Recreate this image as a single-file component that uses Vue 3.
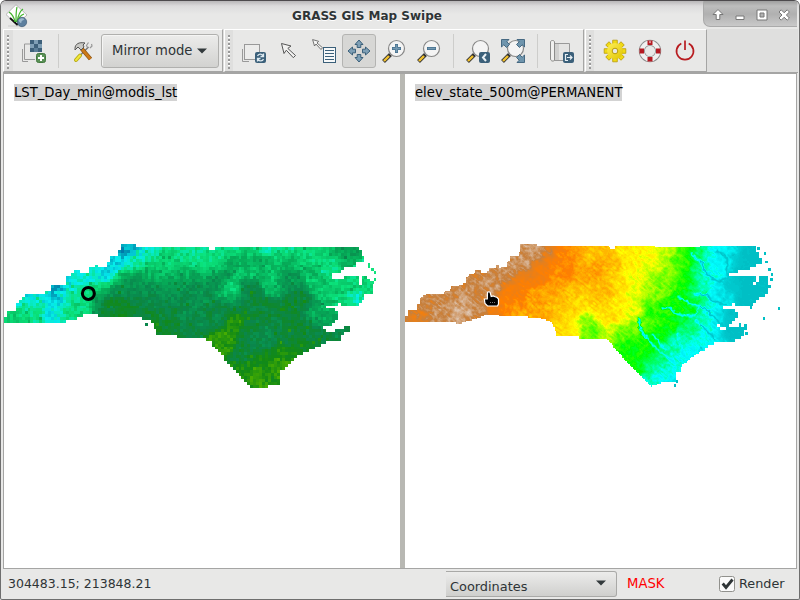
<script setup>
const hash = (x, y) => {
  let h = (x * 374761393 + y * 668265263) | 0
  h = Math.imul(h ^ (h >>> 13), 1274126177)
  return ((h ^ (h >>> 16)) >>> 0) / 4294967295
}
const smooth = (x, y) => {
  const ix = Math.floor(x), iy = Math.floor(y)
  let fx = x - ix, fy = y - iy
  fx = fx * fx * (3 - 2 * fx)
  fy = fy * fy * (3 - 2 * fy)
  const a = hash(ix, iy) * (1 - fx) + hash(ix + 1, iy) * fx
  const b = hash(ix, iy + 1) * (1 - fx) + hash(ix + 1, iy + 1) * fx
  return (a * (1 - fy) + b * fy) * 2 - 1
}
const parse = s => s.trim().split(/\s+/).map(p => p.split(',').map(Number))
const inside = (x, y, poly) => {
  let r = false
  for (let i = 0, j = poly.length - 1; i < poly.length; j = i++) {
    const [xi, yi] = poly[i], [xj, yj] = poly[j]
    if ((yi > y) !== (yj > y) && x < ((xj - xi) * (y - yi)) / (yj - yi) + xi) r = !r
  }
  return r
}
const field = (x, y, pts, s) => {
  let n = 0, d = 0
  for (const [px, py, v] of pts) {
    const q = (px - x) ** 2 + (py - y) ** 2
    const w = Math.exp(-q / s) + 1e-7 / (1 + q)
    n += w * v
    d += w
  }
  return n / d
}
const lineDistance = (x, y, line) => {
  let best = 1e9
  for (let i = 1; i < line.length; i++) {
    const [ax, ay] = line[i - 1], [bx, by] = line[i]
    const dx = bx - ax, dy = by - ay
    const t = Math.max(0, Math.min(1, ((x - ax) * dx + (y - ay) * dy) / (dx * dx + dy * dy)))
    best = Math.min(best, Math.hypot(x - ax - t * dx, y - ay - t * dy))
  }
  return best
}
const STEPS = 14
const shade = (stops, level) => {
  const t = Math.max(0, Math.min(stops.length - 1.001, level / STEPS))
  const i = Math.floor(t), f = t - i
  return `rgb(${stops[i].map((c, k) => Math.round(c + (stops[i + 1][k] - c) * f)).join(',')})`
}
// Rasterise a field into one path per colour class.
const raster = ({ x0, x1, y0, y1, size, test, value, stops }) => {
  const layers = {}
  for (let j = 0; y0 + j * size < y1; j++) {
    const y = y0 + j * size
    for (let i = 0; x0 + i * size < x1; i++) {
      const x = x0 + i * size
      if (!test(x + size / 2, y + size / 2)) continue
      const v = value(x + size / 2, y + size / 2, i, j)
      const k = Math.round(Math.max(0, Math.min(stops.length - 1, v)) * STEPS)
      const X = +x.toFixed(2), Y = +y.toFixed(2)
      layers[k] = (layers[k] || '') + `M${X} ${Y}h${size}v${size}h-${size}z`
    }
  }
  return Object.entries(layers).map(([k, d]) => ({ d, fill: shade(stops, +k) }))
}

const southWest = `207,339 178,339 178,336 157,336 155,330 151.5,322 145,320 136.5,317.5 100,316.5 98,315 86.5,315 76.5,319 58,324 52,322.5`
const northWest = `4,323 4,317 7,316 7,310 17,310 17,304 20,304 20,299 22,296 27,294 44,294 45,291 51,290 52,286 58,286 66,283 67,276 75,273 76,270 81,270 82,274 88,272 89,269 96,268 96,265 98,265 99,268 107,267 107,262 110,261 110,257 118,256 120,250 120,244 136,244 136,246 209,246 210,249 215,249 215,246`
const leftOutline = parse(`${northWest} 357.7,246 360,249 362,254 365,257 366,263.5 358,261 355,267 348,268 342,270 342,272 331.5,272.5 331.5,278 345,278 347,275.500 357.500,275.500 358,286 361,286 362,275 368,277 371.5,281 373.5,293.5 365,295 361.5,302 356.5,306.5 340,306.5 340,304 333,304.500 326,304.500 326,307 333,309 338,311 338,318 331.5,326.5 323,327 321.5,330 333,331 342,328 346.5,326.5 350,326.5 349,331.5 341.5,335 340,340 328,342 316.5,346.5 306.5,351.5 295,358 286.5,366.5 279,373 278,385 253,388 245,380 226.5,361.5 210,341 ${southWest}`)
const shift = s => parse(s).map(([x, y]) => `${x + 400.5},${y}`).join(' ')
const rightOutline = parse(`${shift(northWest)} 695,247.5 757,246 758,255 762,262 753,267 749,270 728,273 728,278 736,276 757,276 754,285 757,285 759,276 766,276 770,287 767,295 762,297 752,307 736,307 736,302 732,306 723,306 727,310 736,310 738,315 728,327 718,325 720,331 728,328 739,328 746,325 745,335 738,340 715,343 703,350 693,357 683,365 680,372 676,372 677,383 662,383 651,387 625,360 607,339 ${shift(southWest)}`)

const lst = parse(`8,320,3.1 15,316,3.3 25,300,2 35,312,3 45,300,2.1 53,289,.9 55,315,2 62,305,2 68,290,2 70,312,3 80,280,2 78,300,3 88,310,3.1 88,293,2.8 95,275,2 96,290,3.4 100,300,5 102,312,5.6 110,270,1.8 115,265,1.2 120,275,3.5 125,250,.9 133,248,1.3 128,262,2 145,250,2 135,265,3 125,285,4.6 120,308,6 135,300,5 140,312,5.2 150,262,3.2 150,274,3.7 150,285,4.5 140,280,4.4 160,252,2.9 165,264,3.2 165,278,4.1 160,292,4.7 175,288,4.6 155,304,4.9 155,315,5.8 157,325,6 170,315,5.1 175,260,3.1 180,275,4 175,300,4.7 172,330,5.9 190,250,2.9 190,262,3.3 190,275,3.9 195,288,4.6 195,300,4.8 190,330,5 185,315,4.8 200,249,2.5 212,258,3 215,265,3.2 235,262,4 220,280,4.6 232,290,3.2 230,305,5 215,320,5 222,340,6.8 235,325,6.5 245,270,3.5 225,250,2.9 245,250,3.1 265,247,2.3 275,258,3.7 255,260,4 285,247,2.6 290,262,3.8 270,280,3.7 250,290,5 265,310,5.2 260,340,5 250,330,5.2 245,370,6.4 255,380,6.8 268,380,6.6 275,370,6.9 265,365,6.2 285,360,6.6 245,355,5.3 300,335,5.6 295,350,5.9 310,335,5.9 290,320,5.3 300,300,5.2 290,280,4.4 305,265,3.5 310,250,3.2 325,255,3.2 330,265,2.8 345,255,4.2 355,252,4.6 364,262,2.6 320,285,3.6 335,290,3.4 350,285,3.4 355,297,2.4 360,285,3.1 370,290,3 345,300,3 320,310,4 330,315,3.9 315,325,4.7 335,335,5 345,330,5 325,338,5.2`)
const elevation = parse(`410,318,4.6 420,312,4.8 415,320,4.3 430,300,5 440,310,5.2 450,298,5 460,290,5.1 465,305,5.6 470,285,5 475,310,5 475,280,4.7 480,295,4.8 490,285,5.5 490,272,5 483,300,4.9 495,308,4.4 505,275,5.2 515,265,5.1 520,255,5.4 525,248,5.3 535,250,5.3 545,250,5 555,250,4 530,262,5 545,262,4.2 535,275,4.2 520,280,4.1 505,290,4 515,295,4.1 500,310,4 515,312,3.6 540,270,4.1 555,262,4 570,258,3.9 560,270,3.9 575,250,3.8 555,285,3.7 540,300,3.7 540,315,3.6 560,325,3.3 558,310,3.4 570,300,3.4 575,315,3.2 585,270,3.6 590,255,3.3 585,305,3.3 600,250,3.5 595,270,3.8 610,265,3.5 600,290,3.5 597,308,3.3 587,322,2.4 595,332,2.1 590,334,2.3 575,330,3 566,333,3.2 610,335,2.7 605,325,3.2 615,310,3.2 620,280,3.2 630,255,3.1 645,255,3 635,275,3 640,290,2.8 630,310,2.9 650,275,2.7 655,290,2.5 665,260,2.7 670,250,2.7 665,280,2.4 680,260,2.2 690,250,2 625,335,2.3 640,325,2.4 650,320,2.2 620,350,2 640,350,2 635,365,2 650,340,2 660,310,2.1 675,300,2 685,285,2 685,310,2 670,330,1.9 690,325,1.6 655,355,1.6 650,370,1.4 655,380,1 665,370,1.3 675,350,1.3 680,340,1.2 690,345,1 670,382,.5 675,365,1 700,265,1.5 700,285,1.2 698,300,1.7 705,255,1.2 710,280,1 715,260,.9 720,250,.8 725,265,.9 728,250,.8 735,255,0 750,260,0 735,270,0 722,295,.7 730,290,.1 745,290,0 765,285,0 750,300,0 700,325,1.1 710,310,1 720,318,.5 732,318,0 705,335,1 715,338,.7 730,335,0 745,330,0 690,355,.8`)
const rivers = [
  '691,254 697,259 702,263 705,272 713,279 719,281 727,279',
  '717,251 722,254 728,260 727,267 728,278',
  '662,308 670,308 674,313 685,316 695,315 700,307',
  '695,294 706,295 713,301 725,305',
  '678,297 687,302 692,305 704,308 712,315 724,327',
  '639,319 640,328 648,340 655,347 665,356 674,361 676,371',
  '653,334 661,345 665,350', '677,334 682,350 681,360', '693,335 697,345 702,348', '695,320 705,329 715,340',
].map(parse)

const leftLayers = raster({
  x0: 4.1, x1: 380, y0: 244, y1: 390, size: 2.93,
  test: (x, y) => inside(x, y, leftOutline),
  value: (x, y, i, j) => {
    const f = field(x, y, lst, 70)
    return (f > 5.5 ? f - 0.3 : f) + smooth(x / 7, y / 7) * 0.35 + (hash(i, j) - 0.5) * 0.8 +
      (hash(i + 500, j) > 0.94 ? 0.6 : 0)
  },
  stops: [[0, 50, 145], [0, 150, 180], [4, 238, 238], [10, 226, 122], [6, 172, 88], [10, 134, 76], [18, 138, 20], [70, 172, 2]],
})
const rightLayers = raster({
  x0: 405, x1: 780, y0: 244, y1: 390, size: 1,
  test: (x, y) => {
    const s = x < 700 ? 1.5 : 3
    return inside((Math.floor(x / s) + 0.5) * s, (Math.floor(y / s) + 0.5) * s, rightOutline)
  },
  value: (x, y, i, j) => {
    const wx = x + smooth(x / 6, y / 6) * 4, wy = y + smooth(x / 6 + 40, y / 6) * 4
    let f = field(wx, wy, elevation, 75)
    if (x > 635 && f > 0.25) {
      const rx = x + smooth(x / 2.5, y / 2.5) * 1.3, ry = y + smooth(x / 2.5 + 9, y / 2.5) * 1.3
      const d = Math.min(...rivers.map(r => lineDistance(rx, ry, r)))
      const bed = x > 700 ? 0.1 : 0.9
      if (f > bed) f -= (f - bed) * Math.exp(-(d * d) / 1.4)
    }
    const u = (x + y * 0.8) / 9, v = (y - x * 0.8) / 4
    const ridge = 1 - Math.abs(smooth(u, v)) * 2
    const a = f < 0.3 ? 0.03 : f < 1.3 ? 0.2 : f < 2.2 ? 0.14 : f < 4.5 ? 0.15 : 0.4
    return f + ridge * a + smooth(x / 2.2, y / 2.2) * a * 0.9 + (hash(i, j) - 0.5) * a * 0.4
  },
  stops: [[0, 191, 197], [0, 255, 255], [0, 255, 0], [255, 255, 0], [255, 127, 0], [198, 128, 62], [220, 190, 165], [250, 248, 245]],
})
const leftIslands = parse(`368,263,2,5 371,268,3,3 374,271,2,3 374,278,2,3 370,281,4,3 145,323,3,3 321,303,3,2`)
const rightIslands = parse(`757,247,3,3 764,252,2,3 765,261,3,2 768,268,3,3 771,273,2,3 770,278,3,3 778,307,2,3 763,317,2,3 739,323,2,5 745,332,3,3 674,384,2,3 676,380,2,3 750,306,2,3`)
</script>

<template>
  <div class="window">
    <header class="titlebar">
      <svg class="logo" viewBox="0 0 24 24">
        <path d="M11 .7 22 11 11.500 20.500 1 10.500z" fill="#fff" stroke="#aaa" stroke-width=".8" />
        <path d="M3 22h14" stroke="#ccc" />
        <path d="M5 14 12 20.500 16 17" fill="none" stroke="#111" stroke-width="1.800" />
        <path d="M11 18C11 10 11 7 12 3M10 18C9 13 7 10 4 8M12 18C13 12 15 7 18 5M12 18C14 13 16 11 19 10" fill="none" stroke="#44b52e" stroke-width="1.200" />
        <circle cx="17" cy="18" r="4.700" fill="#5d7f9e" stroke="#405b75" stroke-width=".7" />
        <path d="M13.500 16c2-2 4-2 6-1-1 2-3 1-3 3s-2 1-3-2" fill="#9db8cc" />
      </svg>
      <h1>GRASS GIS Map Swipe</h1>
      <div class="controls">
        <svg viewBox="0 0 94 25">
          <g fill="#fff" stroke="#777" stroke-width="1" stroke-linejoin="round">
            <path d="m15 8.500 5 5h-3.200v5h-3.600v-5H10z" />
            <rect x="33" y="15" width="8" height="3.500" />
            <path fill-rule="evenodd" d="M54 9h10v10H54zM57 12v4h4v-4z" />
            <path d="m76 11 2.200-2.200 3 3 3-3 2.200 2.200-3 3 3 3-2.200 2.200-3-3-3 3L76 17l3-3z" />
          </g>
        </svg>
      </div>
    </header>

    <nav class="toolbars">
      <div class="toolbar first">
        <i class="grip"></i>
        <button class="tool">
          <svg viewBox="0 0 24 24">
            <path d="M.5 10v12.500H6M8 5H2.500v15.500H13" fill="none" stroke="#999" />
            <rect x="8" y="1" width="12" height="12" fill="#3d607a" />
            <path d="M12 1h4v4h-4zM8 5h4v4H8zM16 5h4v4h-4z" fill="#7f9fb5" />
            <path d="M12 9h4v4h-4z" fill="#5b7e97" />
            <rect x="14.500" y="14.500" width="9" height="9" rx="2" fill="#5a9156" stroke="#42793f" />
            <path d="M19 16v6M16 19h6" stroke="#fff" stroke-width="2" />
          </svg>
        </button>
        <i class="sep"></i>
        <button class="tool">
          <svg viewBox="0 0 24 24">
            <path d="m17.500 8-8 8" stroke="#777" stroke-width="1.500" />
            <path d="m16.500 8.500-1-2 2-3M19 9l2-2-.5-2" fill="none" stroke="#999" stroke-width="1.200" />
            <path d="m9 16.500-4 4.500" stroke="#b9ac16" stroke-width="4" stroke-linecap="round" />
            <path d="m9 16.500-4 4.500" stroke="#f1e83a" stroke-width="2" stroke-linecap="round" />
            <path d="m10.500 9.500 9 10.500" stroke="#7f4b10" stroke-width="4.200" />
            <path d="m10.500 9.500 9 10.500" stroke="#cc7917" stroke-width="2.800" />
            <path d="M4 9.500C4 5 8 2.800 14 4l-2 2 1 2-3 3-3-3-3 3z" fill="#c9c9c5" stroke="#555" />
          </svg>
        </button>
        <button class="mode">Mirror mode<svg viewBox="0 0 10 6"><path d="M0 .5h10L5 5.500z" fill="#333a3c" /></svg></button>
      </div>

      <div class="toolbar second">
        <i class="grip"></i>
        <button class="tool">
          <svg viewBox="0 0 24 24">
            <path d="M.5 10v12.500H7" fill="none" stroke="#999" />
            <rect x="2.500" y="5.500" width="15" height="15" fill="#ececeb" stroke="#999" />
            <rect x="13" y="13" width="11" height="11" rx="2" fill="#3b607a" />
            <path d="M15.500 17c1-2.500 4-2.500 5.500-.5M21.500 14.500v3h-3M21.500 20c-1 2.500-4 2.500-5.500.5M15.500 22.500v-3h3" fill="none" stroke="#dce8ef" stroke-width="1.300" />
          </svg>
        </button>
        <button class="tool">
          <svg viewBox="0 0 24 24"><path d="M4.500 4.500 14 7l-3.200 2.400 7.700 7.100-2.200 2.200-7-7.500L7 14.500z" fill="#f2f2f1" stroke="#555" /></svg>
        </button>
        <button class="tool">
          <svg viewBox="0 0 24 24">
            <path d="m.6.6 6 1.700L5 4l5.500 4.700L9 10.500 4 5 2.500 7z" fill="#f5f5f4" stroke="#555" stroke-width=".8" />
            <rect x="11.500" y="8.500" width="12" height="15" fill="#f6f8f9" stroke="#3b607a" />
            <path d="M13 11.500h9M13 14.500h9M13 17.500h9M13 20.500h9" stroke="#3b607a" />
          </svg>
        </button>
        <button class="tool active">
          <svg viewBox="0 0 24 24">
            <g fill="#7e9fb5" stroke="#3b607a" stroke-linejoin="round">
              <path d="m12 1 4 4.500h-2.200v3h-3.600v-3H8zM12 23l4-4.500h-2.200v-3h-3.600v3H8zM1 12l4.500-4v2.200h3v3.600h-3V16zM23 12l-4.500-4v2.200h-3v3.600h3V16z" />
            </g>
          </svg>
        </button>
        <button v-for="kind in ['in', 'out']" :key="kind" class="tool">
          <svg viewBox="0 0 24 24">
            <path d="m8.500 15.500-7 7" stroke="#333" stroke-width="4" />
            <path d="m7 17-5 5" stroke="#f2c12d" stroke-width="2.400" />
            <circle cx="14.500" cy="9.500" r="8" fill="#f4f4f4" stroke="#888" stroke-width="1.200" />
            <path :d="kind === 'in' ? 'M14.500 5v9M10 9.500h9' : 'M10 9.500h9'" stroke="#46718f" stroke-width="3" />
            <path :d="kind === 'in' ? 'M14.500 5.700v7.600M10.700 9.500h7.600' : 'M10.700 9.500h7.600'" stroke="#7499b1" stroke-width="1.600" />
          </svg>
        </button>
        <i class="sep"></i>
        <button class="tool">
          <svg viewBox="0 0 24 24">
            <path d="m8.500 15.500-7 7" stroke="#333" stroke-width="4" />
            <path d="m7 17-5 5" stroke="#f2c12d" stroke-width="2.400" />
            <circle cx="14.500" cy="9.500" r="8" fill="#f4f4f4" stroke="#888" stroke-width="1.200" />
            <rect x="13" y="13" width="11" height="11" rx="2" fill="#3b607a" />
            <path d="m20 15-3 3.500 3 3.500" fill="none" stroke="#e7eff4" stroke-width="2" />
          </svg>
        </button>
        <button class="tool">
          <svg viewBox="0 0 24 24">
            <path d="m8.500 15.500-7 7" stroke="#333" stroke-width="4" />
            <path d="m7 17-5 5" stroke="#f2c12d" stroke-width="2.400" />
            <circle cx="14.500" cy="9.500" r="8" fill="#f4f4f4" stroke="#888" stroke-width="1.200" />
            <g fill="#6f95ad" stroke="#3b607a" stroke-width=".9">
              <path d="M.5.500H8L5.800 2.800 8.500 5.500l-3 3L2.800 5.800.5 8zM23.500.500H16l2.200 2.300-2.700 2.700 3 3 2.700-2.700L23.500 8zM23.500 23.500H16l2.200-2.300-2.700-2.700 3-3 2.700 2.700L23.500 16z" />
            </g>
          </svg>
        </button>
        <i class="sep"></i>
        <button class="tool">
          <svg viewBox="0 0 24 24">
            <path d="M4.500 4.500h15v17h-15z" fill="#e4e4e3" stroke="#999" />
            <path d="M5 5h4v16H5z" fill="#d0d0cf" />
            <path d="M.5 3c0-2 4-2 4 0v18.500c-2 1.500-4 0-4-1.500z" fill="#f0f0ef" stroke="#8c8c8b" />
            <rect x="13" y="13" width="11" height="11" rx="2" fill="#3b607a" />
            <path d="M18 15.500h-2.500v6H18M17 18.500h5M20 16.500l2 2-2 2" fill="none" stroke="#e7eff4" stroke-width="1.200" />
          </svg>
        </button>
      </div>

      <div class="toolbar third">
        <i class="grip"></i>
        <button class="tool">
          <svg viewBox="0 0 24 24">
            <defs>
              <linearGradient id="gold" x1="0" y1="0" x2="1" y2="1"><stop stop-color="#fff05a" /><stop offset="1" stop-color="#dfc400" /></linearGradient>
            </defs>
            <g fill="#f0da12" stroke="#b99b0a" stroke-width=".8">
              <path v-for="a in 8" :key="a" :transform="`rotate(${a * 45} 12 12)`" d="M9.700 5V1.200h4.600V5z" />
            </g>
            <circle cx="12" cy="12" r="8" fill="url(#gold)" />
            <circle cx="12" cy="12" r="2.800" fill="#e8e8e6" stroke="#b99b0a" />
          </svg>
        </button>
        <button class="tool">
          <svg viewBox="0 0 24 24">
            <circle cx="12" cy="12" r="8.200" fill="none" stroke="#8d8d8d" stroke-width="6" />
            <circle cx="12" cy="12" r="8.200" fill="none" stroke="#f0f0f0" stroke-width="4.400" />
            <path d="M9.500 1.500h5V6h-5zM9.500 18h5v4.500h-5zM1.500 9.500H6v5H1.500zM18 9.500h4.500v5H18z" fill="#b51a22" />
            <path d="M11 2.500h2l-1 2z" fill="#fff" />
          </svg>
        </button>
        <button class="tool">
          <svg viewBox="0 0 24 24"><path d="M8.300 4.500a8.500 8.500 0 1 0 7.400 0M12 1.500V11" fill="none" stroke="#b81c20" stroke-width="1.700" /></svg>
        </button>
      </div>
    </nav>

    <main class="panes">
      <section class="pane">
        <svg class="map" viewBox="4 74 396 494" shape-rendering="crispEdges">
          <path v-for="l in leftLayers" :key="l.fill" :d="l.d" :fill="l.fill" />
          <rect v-for="(r, i) in leftIslands" :key="i" :x="r[0]" :y="r[1]" :width="r[2]" :height="r[3]" :fill="i < 5 ? '#10e27c' : '#0a864c'" />
          <circle cx="88.400" cy="293.400" r="6" fill="none" stroke="#000" stroke-width="3" shape-rendering="auto" />
        </svg>
        <span class="label">LST_Day_min@modis_lst</span>
      </section>
      <i class="sash"></i>
      <section class="pane">
        <svg class="map" viewBox="405 74 391 494" shape-rendering="crispEdges">
          <path v-for="l in rightLayers" :key="l.fill" :d="l.d" :fill="l.fill" />
          <rect v-for="(r, i) in rightIslands" :key="i" :x="r[0]" :y="r[1]" :width="r[2]" :height="r[3]" fill="#00c0c5" />
          <path d="M487.500 292.500q1.500-1.500 2.700 0l1 4 2-.5 2 .8 2 .7 1.300 1.500v5l-1 2h-10l-2.500-2.500-.7-4.500h3z" fill="#000" stroke="#fff" stroke-width="1.200" shape-rendering="auto" />
          <path d="M490 302h6" stroke="#777" stroke-dasharray="1 1" />
        </svg>
        <span class="label">elev_state_500m@PERMANENT</span>
      </section>
    </main>

    <footer class="status">
      <span class="coords">304483.15; 213848.21</span>
      <button class="select">Coordinates<svg viewBox="0 0 10 6"><path d="M0 .500h10L5 5.500z" fill="#333a3c" /></svg></button>
      <span class="mask">MASK</span>
      <label class="render">
        <svg viewBox="0 0 16 16">
          <rect x=".5" y=".5" width="15" height="15" rx="2" fill="#fafafa" stroke="#91918d" />
          <path d="m3.700 7.500 3.300 4 6.500-8" fill="none" stroke="#2e3436" stroke-width="2.800" />
        </svg>
        Render
      </label>
    </footer>
  </div>
</template>

<style>
body { background: #fff; overflow: hidden; }
</style>
<style scoped>
* { box-sizing: border-box; }
.window {
  width: 800px; height: 600px; display: flex; flex-direction: column;
  border: 1px solid #6e6e6e; border-top-color: #4d4a4d; border-radius: 6px 6px 2px 2px;
  background: #e8e8e7; overflow: hidden; padding: 0 2px;
  font: 12.500px "DejaVu Sans", sans-serif; color: #2e3436;
}
button { font: inherit; color: inherit; border: 0; background: none; padding: 0; }
svg { display: block; flex: none; }
.titlebar {
  height: 28px; flex: none; margin: 0 -2px; display: grid; grid-template-columns: 94px 1fr 94px;
  padding-right: 2px; background: linear-gradient(#b8b6b8, #dcdbdc 5px, #e8e8e7 13px);
}
.logo { width: 24px; height: 24px; margin: 3px 0 0 4px; }
h1 { margin: 0; text-align: center; font-size: 12px; line-height: 30px; font-weight: bold; padding-right: 64px; text-shadow: 0 1px #fff; }
.controls {
  height: 26px; border: solid #aaa; border-width: 0 0 1px 1px; border-radius: 0 0 0 7px;
  background: linear-gradient(#9f9f9f, #bdbdbd 5px, #b0b0b0 13px, #c9c9c9); overflow: hidden;
}
.controls svg { width: 94px; height: 25px; margin-left: -1px; }
.toolbars { height: 44px; flex: none; display: flex; background: #dfdfde; margin-right: -1px; border-bottom: 1px solid #a5a5a4; }
.toolbar {
  display: flex; align-items: center; background: #e8e8e7; border-top: 1px solid #fff;
  border-right: 1px solid #a5a5a4; border-bottom: 1px solid #a5a5a4; border-left: 1px solid #fff;
}
.first { width: 220px; margin-right: 1px; }
.second { width: 360px; margin-right: 1px; }
.third { width: 122px; }
.grip {
  width: 9px; align-self: stretch; margin-right: 3px; background:
    repeating-linear-gradient(#999 0 2px, #fff 2px 3px, transparent 3px 4px) 3px 5px / 2px 34px no-repeat, #dfdfde;
}
.second .grip { width: 8px; margin-right: 4px; }
.third .grip { width: 8px; }
.tool { width: 35px; height: 34px; flex: none; padding: 5px 6px 5px 5px; }
.first .tool, .third .tool { padding: 5px 5px 5px 6px; }
.tool svg { width: 24px; height: 24px; }
.tool.active { width: 34px; margin-right: 1px; padding: 4px; border: 1px solid #b4b4b2; border-radius: 3px; background: #d7d7d5; }
.sep { width: 14px; height: 34px; flex: none; background: linear-gradient(#cdcdcb, #cdcdcb) 6px 0 / 1px 34px no-repeat; }
.first .sep { background-position: 7px 0; }
.mode {
  width: 118px; height: 34px; flex: none; margin-left: 1px; display: flex; align-items: center; gap: 5px;
  padding: 0 0 1px 10px; border: 1px solid #b0b0ae; border-radius: 3px; font-size: 13.200px;
  background: linear-gradient(#ececeb, #d2d2d0); box-shadow: inset 1px 1px #f5f5f4;
}
.mode svg { width: 10px; height: 6px; margin-top: 1px; }
.panes { height: 496px; flex: none; display: flex; background: #fff; border: solid #a5a5a4; border-width: 1px; }
.pane { display: grid; flex: none; width: 396px; }
.pane:last-child { width: 391px; }
.pane > * { grid-area: 1 / 1; }
.map { width: 100%; height: 494px; }
.label {
  justify-self: start; align-self: start; margin: 10px 0 0 10px; height: 17px; background: #d3d3d3; color: #000;
  font: 13.200px/17px "DejaVu Sans", sans-serif; white-space: nowrap;
}
.sash { width: 5px; flex: none; background: #b8b8b3; }
.status { flex: 1; display: flex; align-items: center; padding: 0 0 1px 5px; white-space: nowrap; }
.coords { width: 438px; }
.select {
  width: 171px; height: 26px; display: flex; justify-content: space-between; align-items: center;
  padding: 5px 10px 0 4px; border: solid #a9a9a7; border-width: 1px 1px 1px 0; border-radius: 0 3px 3px 0;
  background: linear-gradient(#ececeb, #cfcfcd); font-size: 12.900px;
}
.select svg { width: 10px; height: 6px; margin-top: -6px; }
.mask { color: #f00; width: 102px; padding-left: 10px; font-size: 13.200px; }
.render { display: flex; align-items: center; gap: 4px; font-size: 12.800px; }
.render svg { width: 16px; height: 16px; }
</style>
